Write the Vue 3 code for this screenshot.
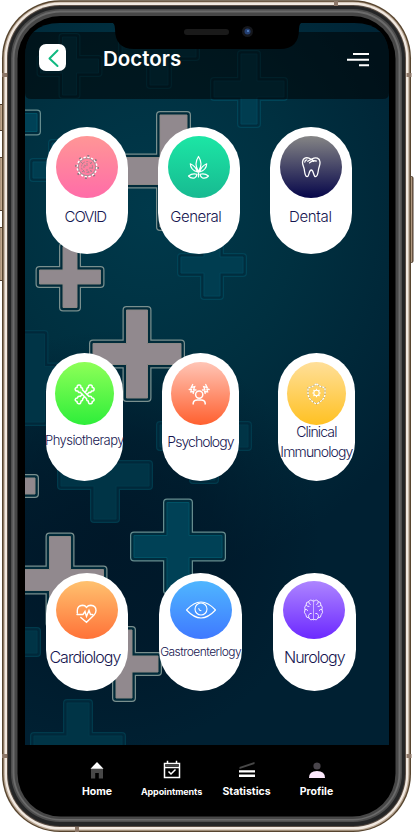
<script setup>
const plus = (cx, cy, len, half) => {
  const a = len - half
  return `M${cx - half} ${cy - len}h${2 * half}v${a}h${a}v${2 * half}h${-a}v${a}h${-2 * half}v${-a}h${-a}v${-2 * half}h${a}z`
}

const crosses = [
  { d: plus(60, 170, 27, 8), tone: 'teal' },
  { d: plus(-4, 122.5, 41, 9), tone: 'bright' },
  { d: plus(173.5, 171, 56, 13.5), tone: 'tan' },
  { d: plus(212, 265, 31, 8), tone: 'teal' },
  { d: plus(70, 277, 30.5, 7), tone: 'tan' },
  { d: plus(33, 378, 44, 11.5), tone: 'dim' },
  { d: plus(137, 354, 44, 10.5), tone: 'tan' },
  { d: plus(204, 436, 44, 11), tone: 'dim' },
  { d: plus(105, 475, 44, 11), tone: 'dim' },
  { d: plus(-2, 486, 37, 8), tone: 'tan' },
  { d: plus(178, 546.5, 44, 11), tone: 'bright' },
  { d: plus(60, 580, 43.5, 10.5), tone: 'tan' },
  { d: plus(124, 664, 34, 8), tone: 'tan' },
  { d: plus(-4, 642, 41, 11), tone: 'dim' },
  { d: plus(78, 747, 44, 11), tone: 'dim' },
  { d: plus(69.5, 66, 29, 7), tone: 'teal' },
  { d: plus(159, 48, 37, 9), tone: 'teal' },
  { d: plus(249, 89, 35, 8), tone: 'teal' }
]

const rows = [
  [
    { name: 'COVID', icon: 'virus', cls: 'covid' },
    { name: 'General', icon: 'leaf', cls: 'general' },
    { name: 'Dental', icon: 'tooth', cls: 'dental' }
  ],
  [
    { name: 'Physiotherapy', icon: 'bones', cls: 'physio' },
    { name: 'Psychology', icon: 'mind', cls: 'psych' },
    { name: 'Clinical Immunology', icon: 'shield', cls: 'immuno' }
  ],
  [
    { name: 'Cardiology', icon: 'heart', cls: 'cardio' },
    { name: 'Gastroenterlogy', icon: 'eye', cls: 'gastro' },
    { name: 'Nurology', icon: 'brain', cls: 'neuro' }
  ]
]

const tabs = ['Home', 'Appointments', 'Statistics', 'Profile']
</script>

<template>
  <div class="phone">
    <svg class="shell" viewBox="0 0 414 833" aria-hidden="true">
      <defs>
        <radialGradient id="glow" gradientUnits="userSpaceOnUse" cx="150" cy="210" r="330" gradientTransform="translate(0 -20) scale(1 1.1)">
          <stop offset="0" stop-color="#00394b" />
          <stop offset=".45" stop-color="#003040" />
          <stop offset="1" stop-color="#002032" />
        </radialGradient>
        <radialGradient id="shade" gradientUnits="userSpaceOnUse" cx="110" cy="540" r="210">
          <stop offset="0" stop-color="#001627" stop-opacity=".85" />
          <stop offset=".5" stop-color="#001627" stop-opacity=".6" />
          <stop offset="1" stop-color="#001627" stop-opacity="0" />
        </radialGradient>
        <linearGradient id="button" x1="0" y1="0" x2="1" y2="0">
          <stop offset="0" stop-color="#8e7966" />
          <stop offset=".6" stop-color="#c9b095" />
          <stop offset="1" stop-color="#6a5644" />
        </linearGradient>
        <clipPath id="view"><path d="M25 745V58Q25 23 60 23H354Q389 23 389 58V745Z" /></clipPath>
      </defs>
      <g fill="url(#button)" stroke="#4c3b2c" stroke-width="1">
        <rect x="-1" y="104.5" width="5" height="26" />
        <rect x="-1" y="157.500" width="5" height="53" />
        <rect x="-1" y="227.500" width="5" height="53" />
        <rect x="408" y="176.500" width="5" height="86" rx="1.500" />
      </g>
      <rect x="2" y=".3" width="409" height="831.700" rx="58" fill="#57452f" />
      <rect x="3.500" y="1.700" width="406" height="829" rx="56.500" fill="#b7a491" />
      <rect x="4.700" y="2.600" width="403.600" height="827" rx="55.500" fill="#f1e9e1" />
      <rect x="7" y="5" width="399" height="822" rx="53" fill="#5a4e45" />
      <rect x="8" y="6" width="397" height="820" rx="52" fill="#242526" />
      <rect x="11" y="9" width="391" height="813" rx="49" fill="#4d4d4d" />
      <rect x="12.500" y="10.500" width="388" height="810" rx="48" fill="#6b6b6b" />
      <rect x="14.500" y="12.500" width="384" height="806.500" rx="46" fill="#474747" />
      <rect x="17.500" y="16" width="378" height="800.500" rx="43" fill="#000" />
      <g fill="#8d7869">
        <rect x="2" y="73" width="5" height="4" /><rect x="406.500" y="73" width="5" height="4" />
        <rect x="2" y="754" width="5" height="4" /><rect x="406.500" y="754" width="5" height="4" />
        <rect x="334" y="1" width="4" height="5" /><rect x="75" y="827" width="4" height="5" />
      </g>
      <g clip-path="url(#view)">
        <rect x="25" y="23" width="364" height="722" fill="url(#glow)" />
        <rect x="25" y="300" width="364" height="445" fill="url(#shade)" />
        <g v-for="(c, i) in crosses" :key="i" :class="c.tone" stroke-linejoin="round">
          <path class="rim" :d="c.d" /><path class="gap" :d="c.d" /><path class="core" :d="c.d" />
        </g>
        <path d="M25 32H389V93Q389 99 383 99H31Q25 99 25 93Z" fill="#000" opacity=".53" />
      </g>
      <path d="M111 22Q115 23 115 29Q115 49 134 49H280Q299 49 299 29Q299 23 303 22Z" fill="#000" />
      <rect x="184" y="29" width="45" height="6" rx="3" fill="#1a1a1a" />
      <circle cx="247.500" cy="31.500" r="5.500" fill="#15171c" />
      <circle cx="247.500" cy="31.500" r="3" fill="#243f72" />
      <circle cx="248" cy="31" r="1" fill="#598acb" />
    </svg>

    <header class="bar">
      <button class="back" aria-label="Back">
        <svg width="26" height="26" viewBox="0 0 26 26"><path d="M17.500 5.500L9.500 13.500L17.500 21" fill="none" stroke="#10b981" stroke-width="2" stroke-linecap="round" stroke-linejoin="round" /></svg>
      </button>
      <h1>Doctors</h1>
      <svg class="menu" width="22" height="14" viewBox="0 0 22 14" fill="#fff"><path d="M6 0h16v2H6zM0 5.700h22v2H0zM12 11.300h10v2H12z" /></svg>
    </header>

    <main>
      <section v-for="(row, r) in rows" :key="r" :class="['row', 'row' + (r + 1)]">
        <article v-for="item in row" :key="item.name" :class="['card', item.cls]">
          <div class="disc">
            <svg class="glyph" width="26" height="26" viewBox="0 0 26 26" fill="none" stroke="#fff" stroke-width="1.100" stroke-linecap="round" stroke-linejoin="round">
              <g v-if="item.icon === 'virus'" stroke-linecap="butt">
                <circle cx="13" cy="13" r="8.800" stroke="#a98d96" stroke-width="1.300" />
                <circle cx="13" cy="13" r="9.800" stroke-width="1.500" stroke-dasharray="2.300 1.548" />
                <circle cx="13" cy="13" r="11.200" stroke="#857b81" stroke-width="1.500" stroke-dasharray="2 6.796" />
                <circle cx="13" cy="13" r="5.500" stroke="#a98490" stroke-width="1" stroke-dasharray="2 1.500" />
                <path d="M7 8l2 2M16 10l2-2M8 18l2-2M16 16l2 2M13 9v3M9 13h2M15 14h3M12 16h2M10 11l2 1M14 17l1 2" stroke="#a98490" stroke-width="1" />
              </g>
              <template v-else-if="item.icon === 'leaf'">
                <path stroke-width="1.200" d="M12.500 17.500Q7.500 10 12.500 2.500Q17.500 10 12.500 17.500zM11.500 18Q9.500 12 4.300 9.800Q4.500 16 11.500 18zM13.500 18Q15.500 12 20.700 9.800Q20.500 16 13.500 18zM12.500 18.500v4.500M11 20.300Q6.500 18.800 2.500 22Q4.800 24.800 8.500 24Q10.500 23 11 20.300zM14 20.300Q18.500 18.800 22.500 22Q20.200 24.800 16.500 24Q14.500 23 14 20.300z" />
              </template>
              <template v-else-if="item.icon === 'tooth'">
                <path stroke-width="1.300" d="M13 5.300C9 2.400 5 3.800 4.500 8C4.300 11 5.900 12.500 6.300 15.500C6.800 19 7 22.700 9.200 22.700C11.200 22.700 10.800 16 13.300 16C15.800 16 15.300 22.700 17.500 22.700C19.700 22.700 19.900 19 20.500 15.500C21 12.500 22.300 11 22 8C21.600 4 18 2.800 14.200 4.800L9.800 7.200M13 5.300Q15 7 18.300 7M11.500 8.900Q13.800 6.500 15.800 7.300M6.800 8Q7 6 8.800 5.900" />
              </template>
              <g v-else-if="item.icon === 'bones'" transform="translate(.7 .5)">
                <path stroke-width="1.500" d="M8.500 10.800L14.900 17.200Q14.500 19.300 16.600 19.400Q16.500 22.500 18.900 22.300Q21 21.800 20.500 20Q22.500 19.800 22.400 17.900Q22 16.200 20.200 16.400Q19.800 14.400 17.300 14.900L10.900 8.500Q11.200 6.200 9.200 6Q9.500 3.200 7.200 3.500Q5 3.800 5.500 6Q3.200 5.900 3.500 8Q4 10 6.200 9.500Q6.600 11.300 8.500 10.800z" />
                <path stroke-width="1.500" d="M13.200 10.600L15.100 8.700Q14.700 6.200 16.700 6Q16.500 3.200 18.800 3.500Q21 3.800 20.500 6Q22.700 5.900 22.400 8Q22 10 19.800 9.500Q19.400 11.300 17.400 10.800L15.400 12.900M12.800 15.300L11 17.200Q11.400 19.300 9.300 19.400Q9.400 22.500 7 22.300Q5 21.800 5.400 20Q3.400 19.800 3.500 17.900Q4 16.200 5.800 16.400Q6.200 14.400 8.500 14.900L10.600 12.900" />
              </g>
              <g v-else-if="item.icon === 'mind'" transform="translate(-.8 0)">
                <circle cx="13" cy="13.600" r="3.600" stroke-width="1.500" />
                <path stroke-width="1.500" stroke-linecap="butt" d="M7 23.500V22Q7.500 19 11 19H15Q18.500 19 19 22V23.500" />
                <path stroke-width="1.300" stroke-linejoin="miter" d="M6.500 3.500L5 6.500L8.500 5.700L7.300 8.800L9.800 9M19.500 3.500L21 6.500L17.500 5.700L18.700 8.800L16.200 9M3 8.500L5.300 8.200L4.600 10.800L7.600 10.500L7 12.500M23 8.500L20.700 8.200L21.400 10.800L18.400 10.500L19 12.500" />
              </g>
              <g v-else-if="item.icon === 'shield'" transform="translate(.5 0)" stroke-linecap="butt">
                <path stroke="#b59c5a" stroke-width="1.200" d="M13 2.800L17 5.500L21.500 6.800V13Q21 19 13 23Q5 19 4.500 13V6.800L9 5.500Z" />
                <path stroke-width="1.300" stroke-dasharray="2.300 1" d="M13 2.800L17 5.500L21.500 6.800V13Q21 19 13 23Q5 19 4.500 13V6.800L9 5.500Z" />
                <circle cx="13" cy="12" r="2.700" />
                <path d="M13 7.800v1.500M13 14.700v1.500M8.800 12h1.500M15.700 12h1.500M10 9l1.100 1.100M14.900 13.900l1.100 1.100M10 15l1.100-1.100M14.900 10.100l1.100-1.100" />
              </g>
              <template v-else-if="item.icon === 'heart'">
                <path stroke-width="1.400" stroke-linejoin="miter" transform="translate(-.5 3)" d="M3.800 13V10.500Q4 5.500 9 5.200Q11.600 5.200 13 7.300Q14.500 5.200 17.300 5.200Q22.500 5.500 22.500 10.500Q22.500 13 20.500 15L13 22.300L7.300 17.500M3.500 14.500H9.500L11.500 11.500L13 16.500L15.500 10.500L17 14.500H19" />
              </template>
              <template v-else-if="item.icon === 'eye'">
                <path d="M-1.500 13Q6 5 13 5Q20 5 27.500 13Q20 21 13 21Q6 21-1.500 13z" />
                <circle cx="13" cy="12" r="6" /><path d="M10.800 11.500Q11 13.500 13 13.700" />
              </template>
              <template v-else>
                <path stroke-width=".8" transform="translate(-.5 0)" d="M13 3V23" stroke="#d9c8ff" />
                <path stroke-width=".9" transform="translate(.8 0) scale(.9 1)" d="M12.500 4Q9 1.800 7.700 4.700Q4.500 4.700 4.800 8Q2.300 10 3.600 12.500Q1.800 15.700 4.500 17.700Q4.500 21 7.800 20.800Q9.500 24.200 12.500 22.500M13.700 4Q17 1.800 18.300 4.700Q21.500 4.700 21.200 8Q23.700 10 22.400 12.500Q24.200 15.700 21.500 17.700Q21.500 21 18.200 20.800Q16.500 24.200 13.700 22.500M7.700 5Q7.500 7 9.500 7.500M18.300 5Q18.500 7 16.500 7.500M5 8.300Q6 9.700 8 9.500M21 8.300Q20 9.700 18 9.500M3.700 12.500Q6 11.500 6.500 13.500M22.300 12.500Q20 11.500 19.500 13.500M7.800 20.800Q6.500 18 9 16.500H10.500M18.200 20.800Q19.500 18 17 16.500H15.500" />
              </template>
            </svg>
          </div>
          <p>{{ item.name }}</p>
        </article>
      </section>
    </main>

    <nav>
      <a v-for="tab in tabs" :key="tab" :class="tab.toLowerCase()">
        <svg width="20" height="20" viewBox="0 0 20 20">
          <template v-if="tab === 'Home'">
            <path d="M4 8.500H16V18.500H11.800V13H8.200V18.500H4Z" fill="#484848" /><path d="M10 2L16.500 8.800H3.500Z" fill="#fff" />
          </template>
          <template v-else-if="tab === 'Appointments'">
            <path d="M2.500 3.500H17.500V17.500H2.500ZM2.500 7.500H17.500M5.500 .8V3.500M14.500 .8V3.500M6.500 11.500L9 14L13.500 9.500" fill="none" stroke="#fff" stroke-width="1.500" />
            <path d="M3.300 4.300H16.700V6.200H3.300Z" fill="#444" />
          </template>
          <template v-else-if="tab === 'Statistics'">
            <path d="M2.500 7L17.500 2V4L2.500 9Z" fill="#484848" /><path d="M2 10.200H18V12.500H2ZM2 14.500H18V17H2Z" fill="#fff" />
          </template>
          <template v-else>
            <circle cx="10" cy="6" r="3.600" fill="#49454b" /><path d="M2 18Q2 11 10 11Q18 11 18 18Z" fill="#fce8fc" />
          </template>
        </svg>
        <span>{{ tab }}</span>
      </a>
    </nav>
  </div>
</template>

<style>
body { margin: 0; background: #fff; overflow: hidden; }
</style>

<style scoped>
.phone { position: relative; width: 414px; height: 833px; overflow: hidden; display: flex; flex-direction: column; font-family: Inter, sans-serif; }
.shell { position: absolute; left: 0; top: 0; width: 414px; height: 833px; }
.glyph { overflow: visible; }
.bar, main, nav { position: relative; }
.rim { fill: none; stroke-width: 8; }
.gap { fill: none; stroke-width: 5.5; }
.core { stroke-width: 1; }
.tan .rim { stroke: #798f8e; }
.tan .gap { stroke: #002b3a; }
.tan .core { fill: #91898e; stroke: #8c8885; }
.teal .rim { stroke: #004457; }
.teal .gap { stroke: #002d3e; }
.teal .core { fill: #003d50; stroke: #00475b; }
.dim .rim { stroke: #003a4c; }
.dim .gap { stroke: #00283a; }
.dim .core { fill: #003446; stroke: #00384a; }
.bright .rim { stroke: #668c8e; }
.bright .gap { stroke: #002c3d; }
.bright .core { fill: #004156; stroke: #005266; }

.bar { height: 127px; box-sizing: border-box; padding: 44px 45px 0 39px; display: flex; align-items: flex-start; }
.back { width: 27px; height: 27px; padding: 0; border: 0; border-radius: 7px; background: #fff; display: grid; place-items: center; }
h1 { margin: 1px 0 0 37px; font-size: 20.5px; line-height: 27px; font-weight: 600; color: #fff; }
.menu { margin: 9px 0 0 auto; }

main { height: 618px; }
.row { display: flex; box-sizing: border-box; padding-left: 45.700px; }
.row1 { height: 226px; gap: 29.700px; }
.row2 { height: 220px; gap: 38.500px; }
.row3 { gap: 31.200px; }
.card { box-sizing: border-box; background: #fff; border-radius: 42px; display: flex; flex-direction: column; align-items: center; flex: none; }
.row1 .card { width: 82.300px; height: 127px; padding-top: 9px; }
.row2 .card { width: 77.500px; height: 128px; padding-top: 9px; }
.row3 .card { width: 82.500px; height: 117.500px; padding-top: 8px; }
.disc { border-radius: 50%; display: grid; place-items: center; flex: none; }
.row1 .disc { width: 62px; height: 62px; }
.row2 .disc { width: 58.500px; height: 63px; }
.row3 .disc { width: 62px; height: 58px; }
p { margin: 9px 0 0; font-size: 15px; font-weight: 300; line-height: 20px; color: #151550; white-space: nowrap; text-align: center; }
.covid .disc { background: linear-gradient(#ff9696, #ff6ca8); }
.general .disc { background: linear-gradient(#1ce6a5, #17ba91); }
.dental .disc { background: linear-gradient(#858585, #06064a); }
.physio .disc { background: linear-gradient(#8eff58, #2eee3a); }
.psych .disc { background: linear-gradient(#ffc5b6, #ff602f); }
.immuno .disc { background: linear-gradient(#ffdf99, #ffc122); }
.cardio .disc { background: linear-gradient(#ffc16f, #ff7238); }
.gastro .disc { background: linear-gradient(#4fb6ff, #3f79ff); }
.neuro .disc { background: linear-gradient(#ad85ff, #6c29ff); }
.covid p { letter-spacing: -1px; margin-left: -3px; }
.general p { letter-spacing: -.5px; margin-left: -6px; }
.dental p { letter-spacing: -.35px; margin-left: -1px; }
.physio p { font-size: 13px; letter-spacing: -.55px; margin-top: 4.500px; }
.psych p { font-size: 14px; letter-spacing: -.95px; margin-top: 7px; }
.immuno p { font-size: 14px; letter-spacing: -.85px; line-height: 19.500px; margin-top: -3px; white-space: normal; width: 77px; }
.cardio p, .neuro p { font-size: 16px; letter-spacing: -.95px; margin-top: 7.500px; }
.cardio p { margin-left: -4px; }
.gastro p { font-size: 12px; letter-spacing: -.55px; margin-top: 2.500px; }

nav { display: flex; padding: 15px 0 0 62px; }
nav a { display: flex; flex-direction: column; align-items: center; color: #fff; font-size: 10.500px; font-weight: 700; }
nav span { line-height: 14px; margin-top: 5px; }
.home { width: 70px; }
.appointments { width: 79px; font-size: 9px; }
.statistics { width: 71px; }
.profile { width: 69px; }
.appointments span { letter-spacing: -.1px; }
</style>
